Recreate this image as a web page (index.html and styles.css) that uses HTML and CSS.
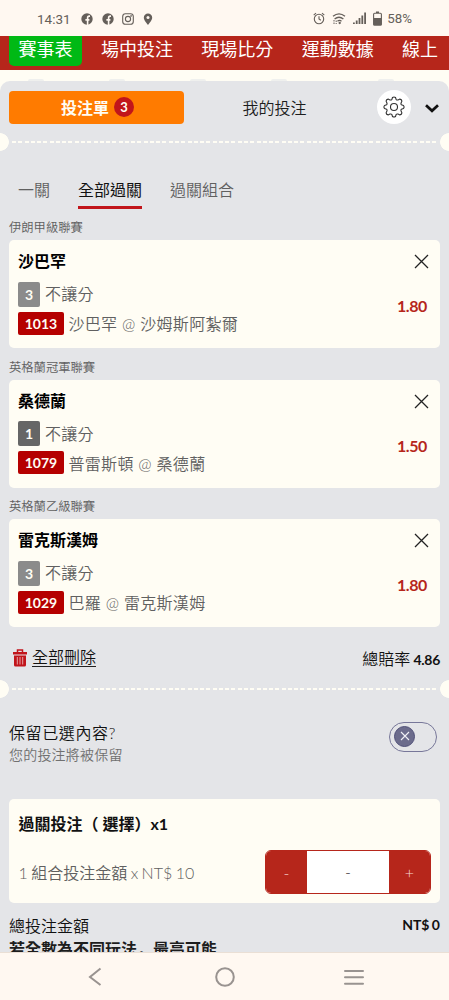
FILE: index.html
```
<!DOCTYPE html>
<html lang="zh-Hant">
<head>
  <meta charset="UTF-8">
  <meta name="viewport" content="width=device-width, initial-scale=1">
  <title>投注單</title>
  <link rel="stylesheet" href="styles.css">
</head>
<body>
  <div class="status-bar">
    <span class="time">14:31</span>
    <div class="status-left">
      <svg width="12" height="12" viewBox="0 0 12 12"><circle cx="6" cy="6" r="5.7" fill="#655f5a"/><path d="M6.6 12V7.3M4.4 6.9h4M9 3.1H8.2Q6.6 3.1 6.6 4.9V8" fill="none" stroke="#fff8f1" stroke-width="1.6"/></svg>
      <svg width="12" height="12" viewBox="0 0 12 12"><circle cx="6" cy="6" r="5.7" fill="#655f5a"/><path d="M6.6 12V7.3M4.4 6.9h4M9 3.1H8.2Q6.6 3.1 6.6 4.9V8" fill="none" stroke="#fff8f1" stroke-width="1.6"/></svg>
      <svg width="12" height="12" viewBox="0 0 12 12" fill="none" stroke="#655f5a" stroke-width="1.1"><rect x=".7" y=".7" width="10.6" height="10.6" rx="2.8"/><circle cx="6" cy="6" r="2.6"/><circle cx="9.1" cy="2.9" r=".3"/></svg>
      <svg width="10" height="12" viewBox="0 0 10 12"><path d="M5 .5a4.2 4.2 0 0 0-4.2 4.2C.8 7.5 5 11.8 5 11.8s4.2-4.3 4.2-7.1A4.2 4.2 0 0 0 5 .5z" fill="#655f5a"/><circle cx="5" cy="4.5" r="1.5" fill="#fff8f1"/></svg>
    </div>
    <div class="status-right">
      <svg width="12" height="13" viewBox="0 0 12 13" fill="none" stroke="#655f5a" stroke-width="1.1"><circle cx="6" cy="7" r="4.7"/><path d="M6 4.3V7l1.8 1.300M.7 3.2 3 1.2M11.3 3.2 9 1.2"/></svg>
      <svg width="14" height="13" viewBox="0 0 14 13" fill="none" stroke="#655f5a" stroke-width="1.3"><path d="M1 4.300Q7 -.6 13 4.300M2.600 7Q7 3.500 11.400 7M5.500 9.300Q7.500 7.600 9.500 9.300"/><path d="M2 8v4M4.200 8.500v3.500" stroke-width="1" stroke-dasharray="1.500 1"/><circle cx="7.700" cy="11" r=".5"/></svg>
      <svg width="13" height="13" viewBox="0 0 13 13" fill="#655f5a"><path d="M0 10.500h1.800V12H0zM2.800 8.500h1.800V12H2.800zM5.600 6h1.800v6H5.600zM8.400 3.500h1.800V12H8.400zM11.200.5H13V12h-1.800z"/></svg>
      <svg width="9" height="15" viewBox="0 0 9 15"><path d="M3 .5h3v1.500H3z" fill="#655f5a"/><rect x=".6" y="2.200" width="7.800" height="12" rx="1" fill="none" stroke="#655f5a" stroke-width="1.100"/><path d="M.6 7h7.800v7H.6z" fill="#655f5a"/></svg>
      <span class="percent">58%</span>
    </div>
  </div>

  <nav class="top-nav">
    <a class="active">賽事表</a>
    <a>場中投注</a>
    <a>現場比分</a>
    <a>運動數據</a>
    <a>線上</a>
  </nav>

  <div class="page">
    <div class="bumps"><i></i><i></i><i></i><i></i><i></i></div>
    <main class="slip">
      <div class="slip-head">
        <button class="slip-tab">投注單 <span class="count">3</span></button>
        <button class="my-bets">我的投注</button>
        <button class="gear">
          <svg width="22" height="22" viewBox="0 0 22 22" fill="none" stroke="#333" stroke-width="1.1" stroke-linejoin="round"><path d="M9.500 1.500Q11 .4 12.500 1.500L13.200 3.600Q13.900 4.300 15 3.900L16.900 3.100Q18.700 3.300 18.900 5.100L18.100 7Q17.700 8.100 18.400 8.800L20.500 9.500Q21.600 11 20.500 12.500L18.400 13.200Q17.700 13.900 18.100 15L18.900 16.900Q18.700 18.700 16.900 18.900L15 18.100Q13.900 17.700 13.200 18.400L12.500 20.500Q11 21.600 9.500 20.500L8.800 18.400Q8.100 17.700 7 18.100L5.100 18.900Q3.300 18.700 3.100 16.900L3.900 15Q4.300 13.900 3.600 13.200L1.500 12.500Q.4 11 1.500 9.500L3.600 8.800Q4.300 8.100 3.900 7L3.100 5.100Q3.300 3.300 5.100 3.100L7 3.900Q8.100 4.300 8.800 3.600z"/><circle cx="11" cy="11" r="3.500"/></svg>
        </button>
        <button class="collapse">
          <svg width="14" height="9" viewBox="0 0 14 9" fill="none" stroke="#111" stroke-width="2.7"><path d="M1 1.200l6 5.600 6-5.600"/></svg>
        </button>
      </div>

      <div class="ticket-line"></div>

      <div class="bet-types">
        <a>一關</a>
        <a class="current">全部過關</a>
        <a>過關組合</a>
      </div>

      <section class="bet">
        <h3>伊朗甲級聯賽</h3>
        <div class="bet-card">
          <div class="pick">
            <h4>沙巴罕</h4>
            <div class="market"><span class="tag">3</span>不讓分</div>
            <div class="match"><span class="code">1013</span>沙巴罕 @ 沙姆斯阿紮爾</div>
          </div>
          <div class="side">
            <svg class="close" width="15" height="15" viewBox="0 0 15 15"><path d="M1 1l13 13M14 1L1 14"/></svg>
            <span class="odds">1.80</span>
          </div>
        </div>
      </section>

      <section class="bet">
        <h3>英格蘭冠軍聯賽</h3>
        <div class="bet-card">
          <div class="pick">
            <h4>桑德蘭</h4>
            <div class="market"><span class="tag dark">1</span>不讓分</div>
            <div class="match"><span class="code">1079</span>普雷斯頓 @ 桑德蘭</div>
          </div>
          <div class="side">
            <svg class="close" width="15" height="15" viewBox="0 0 15 15"><path d="M1 1l13 13M14 1L1 14"/></svg>
            <span class="odds">1.50</span>
          </div>
        </div>
      </section>

      <section class="bet">
        <h3>英格蘭乙級聯賽</h3>
        <div class="bet-card">
          <div class="pick">
            <h4>雷克斯漢姆</h4>
            <div class="market"><span class="tag">3</span>不讓分</div>
            <div class="match"><span class="code">1029</span>巴羅 @ 雷克斯漢姆</div>
          </div>
          <div class="side">
            <svg class="close" width="15" height="15" viewBox="0 0 15 15"><path d="M1 1l13 13M14 1L1 14"/></svg>
            <span class="odds">1.80</span>
          </div>
        </div>
      </section>

      <div class="summary">
        <a class="delete-all">
          <svg width="14" height="18" viewBox="0 0 14 18"><path d="M0 3h14v2.500H0zM1 6.500h12V16q0 1.500-1.500 1.500h-9Q1 17.500 1 16z" fill="#c1151b"/><path d="M4.500 3V1h5v2" fill="none" stroke="#c1151b" stroke-width="1.500"/><path d="M4.300 8v7.500M7 8v7.500M9.700 8v7.500" stroke="#e5a3a6" stroke-width="1"/></svg>
          <span>全部刪除</span>
        </a>
        <div class="total-odds">總賠率 <b>4.86</b></div>
      </div>

      <div class="ticket-line second"></div>

      <div class="keep">
        <div>
          <div class="keep-title">保留已選內容?</div>
          <div class="keep-note">您的投注將被保留</div>
        </div>
        <div class="toggle">
          <span class="knob"><svg width="10" height="10" viewBox="0 0 10 10"><path d="M1 1l8 8M9 1L1 9" stroke="#f1f1f6" stroke-width="1.1"/></svg></span>
        </div>
      </div>

      <div class="stake-card">
        <h4>過關投注（ 選擇）x1</h4>
        <div class="stake-row">
          <span class="stake-label">1 組合投注金額 x NT$ 10</span>
          <div class="stepper">
            <button>-</button>
            <span class="value">-</span>
            <button>+</button>
          </div>
        </div>
      </div>

      <div class="total">
        <span>總投注金額</span>
        <b>NT$ 0</b>
      </div>
      <div class="max-win">若全數為不同玩法<span class="comma" lang="zh-Hans">，</span>最高可能</div>
    </main>
  </div>

  <div class="android-nav">
    <svg width="17" height="20" viewBox="0 0 17 20"><path d="M12.500 1.500L2 10l10.500 8"/></svg>
    <svg width="20" height="20" viewBox="0 0 20 20"><circle cx="10" cy="10" r="8.800"/></svg>
    <svg width="20" height="20" viewBox="0 0 20 20"><path d="M1 4h18M1 10.300h18M1 16.700h18" stroke-linecap="round"/></svg>
  </div>
</body>
</html>
```
FILE: styles.css
```
* {
  box-sizing: border-box;
}
body {
  margin: 0;
  width: 449px;
  height: 1000px;
  overflow: hidden;
  display: flex;
  flex-direction: column;
  background: #fffdf4;
  color: #1d1d1d;
  font-family: Lato, "Noto Sans CJK TC", sans-serif;
  font-size: 16px;
  font-weight: 350;
}
h3, h4 {
  margin: 0;
}
button {
  border: none;
  padding: 0;
  background: none;
  color: inherit;
  font: inherit;
}
svg {
  display: block;
  flex: none;
}

/* phone status bar */
.status-bar {
  height: 36px;
  flex: none;
  display: flex;
  align-items: center;
  padding: 1px 37px 0;
  background: #fff8f1;
  color: #655f5a;
  font-family: Roboto, sans-serif;
  font-weight: 400;
}
.time {
  width: 44px;
  font-size: 13.5px;
}
.status-left {
  display: flex;
  gap: 8.5px;
}
.status-right {
  display: flex;
  align-items: center;
  gap: 7px;
  margin-left: auto;
}
.percent {
  font-size: 13.3px;
  margin-left: -2px;
}

.top-nav {
  height: 34px;
  flex: none;
  display: flex;
  align-items: flex-start;
  padding-left: 9px;
  overflow: hidden;
  white-space: nowrap;
  background: #b6261b;
  color: #fff;
  font-size: 18px;
  font-weight: 400;
  line-height: 26px;
}
.top-nav a {
  padding: 0 9.5px;
  margin-right: 9.4px;
  height: 30px;
}
.top-nav .active {
  background: #00b915;
  border-radius: 0 0 5px 5px;
}

.page {
  flex: 1;
  min-height: 0;
  display: flex;
  flex-direction: column;
}
.bumps {
  height: 11px;
  flex: none;
  display: flex;
  align-items: flex-end;
  gap: 65px;
  padding-left: 28px;
}
.bumps i {
  width: 16px;
  height: 2px;
  border-radius: 8px 8px 0 0;
  background: #eff0ee;
}
.bumps i:last-child {
  margin-left: 26px;
}
.slip {
  flex: 1;
  min-height: 0;
  overflow: hidden;
  background: #e4e5e8;
  border-radius: 10px 10px 0 0;
}

.slip-head {
  display: flex;
  align-items: center;
  height: 52px;
  padding: 0 10px 0 9px;
}
.slip-tab {
  width: 175px;
  height: 33px;
  display: flex;
  align-items: center;
  justify-content: center;
  gap: 5px;
  padding-left: 2px;
  border-radius: 4px;
  background: #ff7b00;
  color: #fffdf4;
  font-weight: 700;
}
.count {
  width: 20px;
  height: 20px;
  border-radius: 50%;
  background: #c1151b;
  font-size: 13px;
  line-height: 20px;
}
.my-bets {
  width: 180px;
  padding-left: 1px;
}
.gear {
  width: 34px;
  height: 34px;
  margin-left: 13px;
  display: flex;
  align-items: center;
  justify-content: center;
  border-radius: 50%;
  background: #fff;
}
.collapse {
  margin: 2px 0 0 14px;
}

/* perforated ticket edge: notches left and right, dashes between */
.ticket-line {
  height: 18px;
  background:
    radial-gradient(circle at 0 50%, #fffdf4 8.5px, transparent 9.2px),
    radial-gradient(circle at 100% 50%, #fffdf4 8.5px, transparent 9.2px),
    repeating-linear-gradient(90deg, #fffdf4 0 4px, transparent 4px 6.27px) 12px 8px / 424px 2px no-repeat;
}

.bet-types {
  display: flex;
  gap: 28px;
  margin-top: 23px;
  padding-left: 18px;
  color: #606060;
}
.bet-types a {
  height: 35px;
  line-height: 32px;
}
.bet-types .current {
  color: #111;
  font-weight: 400;
  border-bottom: 3px solid #c1151b;
}

.bet {
  height: 139.5px;
  padding: 0 9px;
}
.bet h3 {
  height: 31px;
  padding-top: 8px;
  color: #606060;
  font-size: 12.3px;
  font-weight: 350;
  line-height: 21px;
}
.bet-card {
  height: 108px;
  display: flex;
  justify-content: space-between;
  padding: 0 11px 0 9px;
  border-radius: 5px;
  background: #fffdf4;
}
.bet-card h4 {
  height: 41px;
  color: #000;
  font-size: 16px;
  line-height: 42px;
}
.market, .match {
  display: flex;
  align-items: center;
  color: #606060;
  letter-spacing: .3px;
}
.market {
  height: 26px;
  line-height: 24px;
}
.match {
  height: 23px;
  margin-top: 4.5px;
}
.tag, .code {
  border-radius: 2px;
  color: #fffdf4;
  font-weight: 700;
  text-align: center;
  letter-spacing: 0;
}
.tag {
  width: 22px;
  height: 25px;
  margin-right: 5px;
  background: #8b8b8b;
  font-size: 14px;
  line-height: 26px;
}
.tag.dark {
  background: #666;
}
.code {
  width: 46px;
  height: 23px;
  margin-right: 4.5px;
  background: #b50000;
  font-size: 14px;
  line-height: 23px;
}
.side {
  display: flex;
  flex-direction: column;
  align-items: flex-end;
  padding-top: 14px;
}
.close {
  stroke: #222;
  stroke-width: 1.3;
}
.odds {
  margin: 27px 2px 0 0;
  color: #b6261b;
  font-weight: 700;
  letter-spacing: -.4px;
  line-height: 20px;
}

.summary {
  display: flex;
  align-items: center;
  justify-content: space-between;
  height: 24px;
  margin-top: 18px;
  padding: 0 9px 0 13px;
  color: #111;
}
.delete-all {
  display: flex;
  align-items: center;
  gap: 5px;
}
.delete-all span {
  line-height: 18px;
  border-bottom: 1px solid #222;
}
.total-odds {
  word-spacing: -1px;
}
.total-odds b {
  font-size: 14px;
  letter-spacing: -.3px;
}
.ticket-line.second {
  margin-top: 10px;
}

.keep {
  display: flex;
  justify-content: space-between;
  margin-top: 23px;
  padding: 0 12px 0 9px;
}
.keep-title {
  height: 23px;
  color: #111;
  letter-spacing: .6px;
  line-height: 23px;
}
.keep-note {
  color: #707070;
  font-size: 14px;
  letter-spacing: .2px;
  line-height: 22px;
}
.toggle {
  width: 48px;
  height: 30px;
  margin-top: 1px;
  padding: 3px 4px;
  border: 1px solid #777799;
  border-radius: 15px;
}
.knob {
  width: 21px;
  height: 21px;
  display: flex;
  align-items: center;
  justify-content: center;
  border: 1px solid #505078;
  border-radius: 50%;
  background: #6c6c8c;
}

.stake-card {
  height: 104px;
  margin: 33.5px 9px 0;
  padding: 0 9px 0 9.5px;
  border-radius: 5px;
  background: #fffdf4;
}
.stake-card h4 {
  height: 51px;
  color: #111;
  font-size: 16px;
  line-height: 50px;
}
.stake-row {
  display: flex;
  align-items: center;
  justify-content: space-between;
}
.stake-label {
  color: #606060;
  word-spacing: -.9px;
}
.stepper {
  width: 166px;
  height: 44px;
  display: flex;
  overflow: hidden;
  border: 1px solid #b6261b;
  border-radius: 6px;
  background: #fff;
  text-align: center;
}
.stepper button {
  width: 41px;
  background: #b6261b;
  color: #f6d9d3;
}
.value {
  flex: 1;
  line-height: 42px;
}

.total {
  display: flex;
  align-items: center;
  justify-content: space-between;
  height: 33px;
  padding: 10px 9px 0;
  color: #111;
}
.total b {
  font-size: 14px;
  word-spacing: -1px;
}
.max-win {
  padding-left: 9px;
  font-weight: 700;
  line-height: 24px;
}
.comma {
  font-family: "Noto Sans CJK SC", sans-serif;
}

.android-nav {
  height: 48px;
  flex: none;
  display: flex;
  align-items: center;
  justify-content: space-between;
  padding: 0 85px 0 88px;
  background: #fff8f1;
  border-top: 1px solid #eadfd5;
}
.android-nav svg {
  fill: none;
  stroke: #999390;
  stroke-width: 2;
}
```
